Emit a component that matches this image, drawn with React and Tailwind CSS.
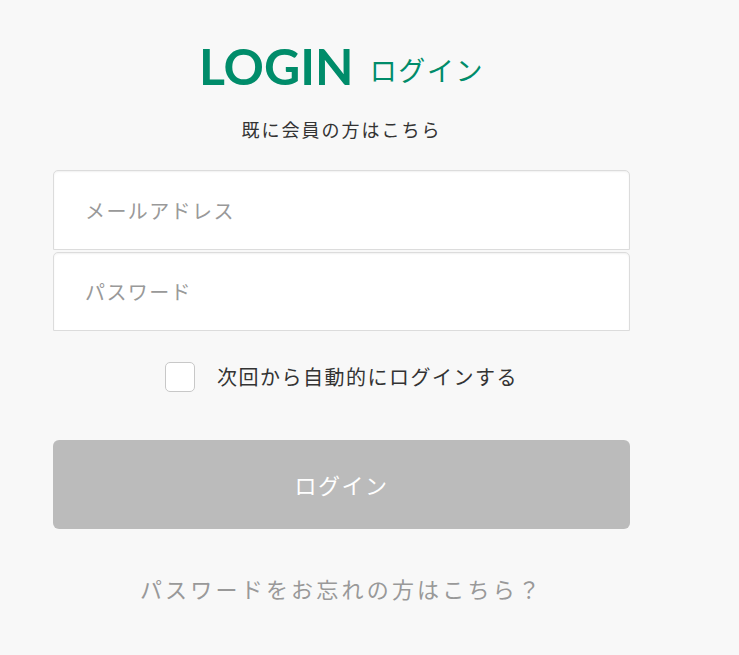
export default function App() {
  const jp = "font-['Noto_Sans_CJK_JP','Noto_Sans',sans-serif]";
  return (
    <div className={`min-h-[655px] w-full bg-[#f8f8f8] ${jp}`}>
      <div className="ml-[53px] flex w-[577px] flex-col items-center pt-[41px]">
        <div className="flex items-baseline justify-center gap-[16px]">
          <span className="font-['Lato',sans-serif] text-[50px] font-bold leading-none text-[#008c6a]">LOGIN</span>
          <span className="-translate-y-[4px] text-[27px] leading-none tracking-[0.06em] text-[#008c6a]">ログイン</span>
        </div>
        <p className="mt-[25px] text-[18px] leading-[26px] tracking-[0.11em] text-[#333]">既に会員の方はこちら</p>
        <div className="mt-[28px] flex w-full flex-col gap-[2px]">
          <input
            type="text"
            placeholder="メールアドレス"
            className="h-[80px] w-full rounded-t-[5px] border border-[#dcdcdc] bg-white pl-[31px] text-[20px] tracking-[0.07em] text-[#333] shadow-[inset_0_1px_2px_rgba(0,0,0,0.06)] outline-none placeholder:text-[#999]"
          />
          <input
            type="password"
            placeholder="パスワード"
            className="h-[79px] w-full rounded-t-[5px] border border-[#dcdcdc] bg-white pl-[31px] text-[20px] tracking-[0.07em] text-[#333] shadow-[inset_0_1px_2px_rgba(0,0,0,0.06)] outline-none placeholder:text-[#999]"
          />
        </div>
        <label className="mt-[31px] flex items-center gap-[22px]">
          <span className="block h-[30px] w-[30px] rounded-[5px] border border-[#c8c8c8] bg-white" />
          <span className="text-[20px] leading-[30px] tracking-[0.075em] text-[#333]">次回から自動的にログインする</span>
        </label>
        <button className="mt-[48px] flex h-[89px] w-full items-center justify-center rounded-[6px] bg-[#bbbbbb] text-[22px] tracking-[0.07em] text-white">
          ログイン
        </button>
        <p className="mt-[44px] text-[22px] leading-[30px] tracking-[3.2px] text-[#999]">パスワードをお忘れの方はこちら？</p>
      </div>
    </div>
  );
}
